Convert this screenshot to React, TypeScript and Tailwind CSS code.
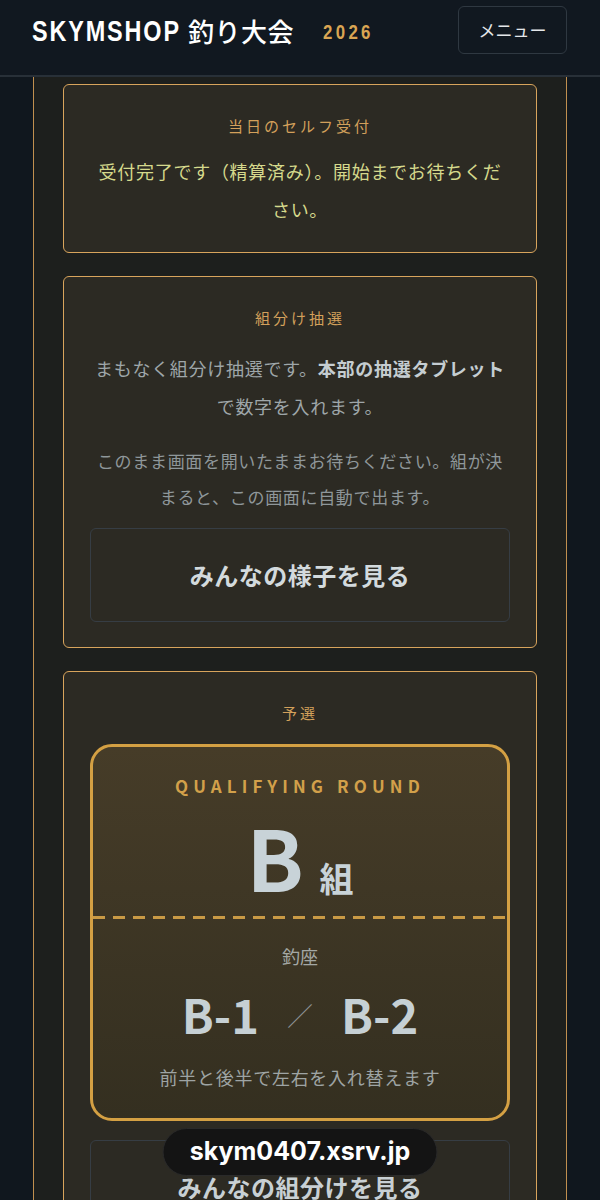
import React from "react";

export default function App() {
  return (
    <div className="relative min-h-[1200px] bg-[#10171e] font-['Noto_Sans_CJK_JP',sans-serif]">
      <header className="flex h-[77px] items-start justify-between border-b-2 border-[#283038] bg-[#111820] pl-[32px] pr-[33px] pt-[6px]">
        <div className="flex h-[48px] items-center">
          <span className="inline-block w-[145px] shrink-0 overflow-visible whitespace-nowrap">
            <span className="inline-block origin-left scale-x-[0.78] font-['Liberation_Sans',sans-serif] text-[30px] font-bold tracking-[0.08em] text-white">
              SKYMSHOP
            </span>
          </span>
          <span className="ml-[11px] text-[26px] font-medium tracking-[0.02em] text-white">釣り大会</span>
          <span className="ml-[29px] mt-[4px] inline-block w-[50px] shrink-0 whitespace-nowrap">
            <span className="inline-block origin-left scale-x-[0.8] font-['Liberation_Sans',sans-serif] text-[21px] font-bold tracking-[0.2em] text-[#d9a553]">
              2026
            </span>
          </span>
        </div>
        <button className="flex h-[48px] w-[109px] items-center justify-center rounded-[6px] border border-[#2f3841] text-[17px] text-[#e4e7ea]">
          メニュー
        </button>
      </header>

      <main className="mx-[33px] flex flex-col gap-[23px] border-x border-[#c08f4f] bg-[#1d1f1d] px-[29px] pt-[7px] pb-[40px]">
        {/* Card 1 */}
        <section className="rounded-[6px] border-[1.5px] border-[#d8a45c] bg-[#2c2a23] px-[26px] pb-[24px] pt-[30px] text-center">
          <h2 className="text-[15px] leading-[22px] tracking-[0.2em] text-[#d3a05b]">当日のセルフ受付</h2>
          <p className="mt-[15px] text-[18px] leading-[38px] tracking-[0.04em] text-[#d5d98c]">
            受付完了です（精算済み）。開始までお待ちください。
          </p>
        </section>

        {/* Card 2 */}
        <section className="rounded-[6px] border-[1.5px] border-[#d8a45c] bg-[#2c2a23] px-[26px] pb-[25px] pt-[30px] text-center">
          <h2 className="text-[15px] leading-[22px] tracking-[0.2em] text-[#d3a05b]">組分け抽選</h2>
          <p className="mt-[20px] text-[18px] leading-[38px] tracking-[0.04em] text-[#9ea6a9]">
            まもなく組分け抽選です。<strong className="font-bold text-[#c5cdd1]">本部の抽選タブレット</strong>で数字を入れます。
          </p>
          <p className="mt-[18px] text-[17px] leading-[36px] tracking-[0.04em] text-[#8f979a]">
            このまま画面を開いたままお待ちください。組が決まると、この画面に自動で出ます。
          </p>
          <button className="mt-[13px] flex h-[94px] w-full items-center justify-center rounded-[6px] border border-[#363d44] text-[24px] font-bold tracking-[0.02em] text-[#d3dadd]">
            みんなの様子を見る
          </button>
        </section>

        {/* Card 3 */}
        <section className="rounded-[6px] border-[1.5px] border-[#d8a45c] bg-[#2c2a23] px-[26px] pb-[26px] pt-[30px] text-center">
          <h2 className="text-[15px] leading-[22px] tracking-[0.2em] text-[#d3a05b]">予選</h2>
          <div className="mt-[20px] overflow-hidden rounded-[22px] border-[3px] border-[#d4a043] bg-gradient-to-b from-[#463c28] to-[#342f20]">
            <div className="pt-[27px] pb-[18px]">
              <div className="text-[17px] font-bold leading-[24px] tracking-[0.3em] text-[#d2a04a]">QUALIFYING ROUND</div>
              <div className="mt-[16px] flex items-baseline justify-center text-[#c8d3d8]">
                <span className="text-[84px] font-bold leading-[84px]">B</span>
                <span className="ml-[16px] text-[34px] font-bold leading-[34px]">組</span>
              </div>
            </div>
            <div className="h-[3px] bg-[repeating-linear-gradient(90deg,#c99a45_0_12px,transparent_12px_20px)]" />
            <div className="pt-[24px] pb-[28px]">
              <div className="text-[18px] leading-[26px] text-[#a4a8a5]">釣座</div>
              <div className="mt-[17px] flex items-center justify-center gap-[28px] text-[#c6d0d4]">
                <span className="text-[47px] font-bold leading-[56px]">B-1</span>
                <span className="text-[26px] font-thin text-[#8f9596]">／</span>
                <span className="text-[47px] font-bold leading-[56px]">B-2</span>
              </div>
              <div className="mt-[22px] text-[18px] leading-[26px] tracking-[0.04em] text-[#9ea4a4]">
                前半と後半で左右を入れ替えます
              </div>
            </div>
          </div>
          <button className="mt-[19px] flex h-[94px] w-full items-center justify-center rounded-[6px] border border-[#363d44] text-[24px] font-bold tracking-[0.02em] text-[#c8d0d4]">
            みんなの組分けを見る
          </button>
        </section>
      </main>

      <div className="fixed bottom-[24px] left-1/2 flex h-[48px] w-[275px] -translate-x-1/2 items-center justify-center rounded-full border border-[#2a2a2a] bg-[#141414] font-['Inter',sans-serif] text-[25px] font-bold text-white">
        skym0407.xsrv.jp
      </div>
    </div>
  );
}
